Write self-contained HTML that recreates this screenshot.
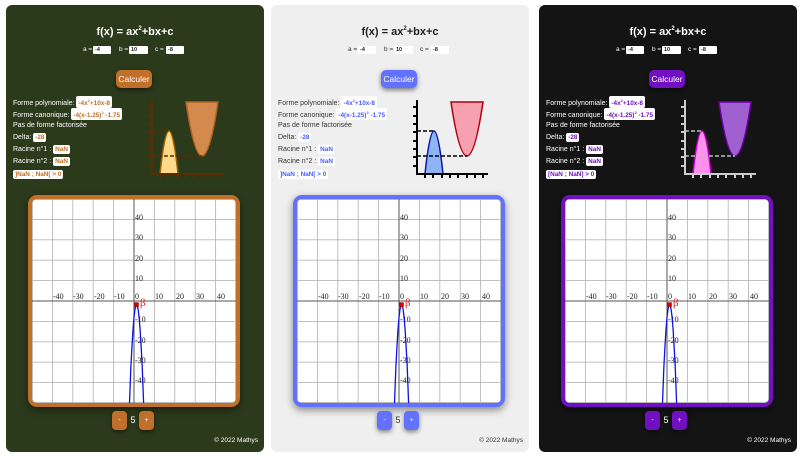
<!DOCTYPE html>
<html><head><meta charset="utf-8">
<style>
*{margin:0;padding:0;box-sizing:border-box}
body{width:800px;height:456px;background:#fff;position:relative;overflow:hidden;font-family:"Liberation Sans",sans-serif}
.p{position:absolute;top:5px;width:258px;height:447px;border-radius:6px;overflow:hidden}
.p>*{position:absolute}
.t{left:0;width:100%;top:17px;text-align:center;font-weight:bold;font-size:11px;line-height:14px}
.t sup{font-size:6px;vertical-align:5px}
.lb{font-size:6.5px;top:41px;line-height:8px}
.in{top:41px;height:8px;background:#fff;border-radius:1px;font-size:5.5px;font-weight:bold;color:#222;padding-left:2px;line-height:8px}
.btn{left:110px;top:65px;width:36px;height:18px;border-radius:5px;color:#fff;font-size:8.5px;text-align:center;line-height:18px;box-shadow:0 2px 5px rgba(0,0,0,.5)}
.r{left:7px;font-size:7px;line-height:10px;white-space:nowrap}
.b{display:inline-block;background:#fff;border-radius:2px;padding:0 2px;font-weight:bold;line-height:9px;font-size:6.4px}
.b sup{font-size:4px}
.mini{left:140px;top:94px}
.fr{left:22px;top:190px;width:212px;height:212px;border:4px solid;border-radius:9px;background:#fff;box-shadow:0 3px 8px rgba(0,0,0,.45);overflow:hidden}
.fr svg{position:absolute;left:0;top:0}
.sb{top:406px;width:15px;height:19px;border-radius:4px;color:#fff;font-size:7px;text-align:center;line-height:19px;box-shadow:0 2px 5px rgba(0,0,0,.45)}
.n{left:123px;top:406px;width:8px;text-align:center;font-size:9px;line-height:19px}
.f{right:6px;top:431px;font-size:6.5px;line-height:10px}
</style></head><body>

<!-- PANEL 1 -->
<div class="p" style="left:6px;background:#2c3a1c;color:#fff">
<div class="t">f(x) = ax<sup>2</sup>+bx+c</div>
<div class="lb" style="left:77px">a =</div><div class="in" style="left:87px;width:18px">-4</div>
<div class="lb" style="left:113px">b =</div><div class="in" style="left:123px;width:19px">10</div>
<div class="lb" style="left:149px">c =</div><div class="in" style="left:160px;width:18px">-8</div>
<div class="btn" style="background:#c0702a">Calculer</div>
<div class="r" style="top:91px">Forme polynomiale: <span class="b" style="color:#c0702a">-4x<sup>2</sup>+10x-8</span></div>
<div class="r" style="top:103px">Forme canonique: <span class="b" style="color:#c0702a">-4(x-1.25)<sup>2</sup> -1.75</span></div>
<div class="r" style="top:116px">Pas de forme factorisée</div>
<div class="r" style="top:128px">Delta: <span class="b" style="color:#c0702a">-28</span></div>
<div class="r" style="top:140px">Racine n°1 : <span class="b" style="color:#c0702a">NaN</span></div>
<div class="r" style="top:152px">Racine n°2 : <span class="b" style="color:#c0702a">NaN</span></div>
<div class="r" style="top:165px"><span class="b" style="color:#c0702a">]NaN ; NaN[ &gt; 0</span></div>
<svg class="mini" width="78" height="80" viewBox="0 0 78 80">
<path d="M14 75 Q23 -11 32 75 Z" fill="#ffd98a" stroke="#9a6200" stroke-width="1.5"/>
<path d="M40 3 Q56 111 72 3 Z" fill="#d48a4c" stroke="#b0601e" stroke-width="1.5"/>
<path d="M6 32H23M6 57H56" stroke="#5a2d00" stroke-width="1.6" stroke-dasharray="4 2"/>
<path d="M6 1V76M5 75H77M2 67H6M2 58H6M2 50H6M2 42H6M2 33H6M2 25H6M2 17H6M2 8H6M14 75V79M22 75V79M31 75V79M39 75V79M47 75V79M56 75V79M64 75V79M72 75V79" stroke="#5a2d00" stroke-width="2" fill="none"/>
</svg>
<div class="fr" style="border-color:#c0702a">
<svg width="204" height="204" viewBox="0 0 204 204">
<g stroke="#b8b8b8" stroke-width="0.9"><path d="M0.5 0V204M20.4 0V204M40.8 0V204M61.2 0V204M81.6 0V204M122.4 0V204M142.8 0V204M163.2 0V204M183.6 0V204M203.5 0V204M0 0.5H204M0 20.4H204M0 40.8H204M0 61.2H204M0 81.6H204M0 122.4H204M0 142.8H204M0 163.2H204M0 183.6H204M0 203.5H204"/></g>
<path d="M102 0V204M0 102H204" stroke="#555" stroke-width="1"/>
<g font-family="Liberation Serif,serif" font-size="8" fill="#222"><text x="21" y="100">-40</text><text x="41" y="100">-30</text><text x="62" y="100">-20</text><text x="82" y="100">-10</text><text x="103" y="100">0</text><text x="123" y="100">10</text><text x="144" y="100">20</text><text x="164" y="100">30</text><text x="185" y="100">40</text><text x="103" y="21">40</text><text x="103" y="41">30</text><text x="103" y="62">20</text><text x="103" y="82">10</text><text x="103" y="123">-10</text><text x="103" y="144">-20</text><text x="103" y="164">-30</text><text x="103" y="184">-40</text></g>
<polyline points="97.5,204 98.9,167.3 100,146.9 101,130.6 102,118.3 103,110.2 104,106.1 104.6,105.6 105.1,106.1 106.1,110.2 107.1,118.3 108.1,130.6 109.1,146.9 110.2,167.3 111.6,204" fill="none" stroke="#1010e0" stroke-width="1.3"/>
<rect x="102.5" y="103.6" width="4" height="4" fill="#d00" stroke="#800" stroke-width=".5"/>
<text x="108" y="107" font-family="Liberation Serif,serif" font-size="11" fill="#e02020">β</text>
</svg></div>
<div class="sb" style="left:106px;background:#c0702a">-</div><div class="n">5</div><div class="sb" style="left:133px;background:#c0702a">+</div>
<div class="f">© 2022 Mathys</div>
</div>

<!-- PANEL 2 -->
<div class="p" style="left:271px;background:#efefef;color:#333">
<div class="t" style="color:#222">f(x) = ax<sup>2</sup>+bx+c</div>
<div class="lb" style="left:77px">a =</div><div class="in" style="left:87px;width:18px">-4</div>
<div class="lb" style="left:113px">b =</div><div class="in" style="left:123px;width:19px">10</div>
<div class="lb" style="left:149px">c =</div><div class="in" style="left:160px;width:18px">-8</div>
<div class="btn" style="background:#6272ff">Calculer</div>
<div class="r" style="top:91px">Forme polynomiale: <span class="b" style="color:#4a5cff">-4x<sup>2</sup>+10x-8</span></div>
<div class="r" style="top:103px">Forme canonique: <span class="b" style="color:#4a5cff">-4(x-1.25)<sup>2</sup> -1.75</span></div>
<div class="r" style="top:116px">Pas de forme factorisée</div>
<div class="r" style="top:128px">Delta: <span class="b" style="color:#4a5cff">-28</span></div>
<div class="r" style="top:140px">Racine n°1 : <span class="b" style="color:#4a5cff">NaN</span></div>
<div class="r" style="top:152px">Racine n°2 : <span class="b" style="color:#4a5cff">NaN</span></div>
<div class="r" style="top:165px"><span class="b" style="color:#4a5cff">]NaN ; NaN[ &gt; 0</span></div>
<svg class="mini" width="78" height="80" viewBox="0 0 78 80">
<path d="M14 75 Q23 -11 32 75 Z" fill="#8fb4f5" stroke="#0a1aa0" stroke-width="1.5"/>
<path d="M40 3 Q56 111 72 3 Z" fill="#f7a0b0" stroke="#b00010" stroke-width="1.5"/>
<path d="M6 32H23M6 57H56" stroke="#000" stroke-width="1.6" stroke-dasharray="4 2"/>
<path d="M6 1V76M5 75H77M2 67H6M2 58H6M2 50H6M2 42H6M2 33H6M2 25H6M2 17H6M2 8H6M14 75V79M22 75V79M31 75V79M39 75V79M47 75V79M56 75V79M64 75V79M72 75V79" stroke="#000" stroke-width="2" fill="none"/>
</svg>
<div class="fr" style="border-color:#6272ff">
<svg width="204" height="204" viewBox="0 0 204 204">
<g stroke="#b8b8b8" stroke-width="0.9"><path d="M0.5 0V204M20.4 0V204M40.8 0V204M61.2 0V204M81.6 0V204M122.4 0V204M142.8 0V204M163.2 0V204M183.6 0V204M203.5 0V204M0 0.5H204M0 20.4H204M0 40.8H204M0 61.2H204M0 81.6H204M0 122.4H204M0 142.8H204M0 163.2H204M0 183.6H204M0 203.5H204"/></g>
<path d="M102 0V204M0 102H204" stroke="#555" stroke-width="1"/>
<g font-family="Liberation Serif,serif" font-size="8" fill="#222"><text x="21" y="100">-40</text><text x="41" y="100">-30</text><text x="62" y="100">-20</text><text x="82" y="100">-10</text><text x="103" y="100">0</text><text x="123" y="100">10</text><text x="144" y="100">20</text><text x="164" y="100">30</text><text x="185" y="100">40</text><text x="103" y="21">40</text><text x="103" y="41">30</text><text x="103" y="62">20</text><text x="103" y="82">10</text><text x="103" y="123">-10</text><text x="103" y="144">-20</text><text x="103" y="164">-30</text><text x="103" y="184">-40</text></g>
<polyline points="97.5,204 98.9,167.3 100,146.9 101,130.6 102,118.3 103,110.2 104,106.1 104.6,105.6 105.1,106.1 106.1,110.2 107.1,118.3 108.1,130.6 109.1,146.9 110.2,167.3 111.6,204" fill="none" stroke="#1010e0" stroke-width="1.3"/>
<rect x="102.5" y="103.6" width="4" height="4" fill="#d00" stroke="#800" stroke-width=".5"/>
<text x="108" y="107" font-family="Liberation Serif,serif" font-size="11" fill="#e02020">β</text>
</svg></div>
<div class="sb" style="left:106px;background:#6272ff">-</div><div class="n">5</div><div class="sb" style="left:133px;background:#6272ff">+</div>
<div class="f">© 2022 Mathys</div>
</div>

<!-- PANEL 3 -->
<div class="p" style="left:539px;background:#141414;color:#fff">
<div class="t">f(x) = ax<sup>2</sup>+bx+c</div>
<div class="lb" style="left:77px">a =</div><div class="in" style="left:87px;width:18px">-4</div>
<div class="lb" style="left:113px">b =</div><div class="in" style="left:123px;width:19px">10</div>
<div class="lb" style="left:149px">c =</div><div class="in" style="left:160px;width:18px">-8</div>
<div class="btn" style="background:#7010c0">Calculer</div>
<div class="r" style="top:91px">Forme polynomiale: <span class="b" style="color:#7010c0">-4x<sup>2</sup>+10x-8</span></div>
<div class="r" style="top:103px">Forme canonique: <span class="b" style="color:#7010c0">-4(x-1.25)<sup>2</sup> -1.75</span></div>
<div class="r" style="top:116px">Pas de forme factorisée</div>
<div class="r" style="top:128px">Delta: <span class="b" style="color:#7010c0">-28</span></div>
<div class="r" style="top:140px">Racine n°1 : <span class="b" style="color:#7010c0">NaN</span></div>
<div class="r" style="top:152px">Racine n°2 : <span class="b" style="color:#7010c0">NaN</span></div>
<div class="r" style="top:165px"><span class="b" style="color:#7010c0">[NaN ; NaN] &gt; 0</span></div>
<svg class="mini" width="78" height="80" viewBox="0 0 78 80">
<path d="M14 75 Q23 -11 32 75 Z" fill="#ff90ee" stroke="#c000c0" stroke-width="1.5"/>
<path d="M40 3 Q56 111 72 3 Z" fill="#a060d0" stroke="#7000b0" stroke-width="1.5"/>
<path d="M6 32H23M6 57H56" stroke="#bbb" stroke-width="1.6" stroke-dasharray="4 2"/>
<path d="M6 1V76M5 75H77M2 67H6M2 58H6M2 50H6M2 42H6M2 33H6M2 25H6M2 17H6M2 8H6M14 75V79M22 75V79M31 75V79M39 75V79M47 75V79M56 75V79M64 75V79M72 75V79" stroke="#ccc" stroke-width="2" fill="none"/>
</svg>
<div class="fr" style="border-color:#7010c0">
<svg width="204" height="204" viewBox="0 0 204 204">
<g stroke="#b8b8b8" stroke-width="0.9"><path d="M0.5 0V204M20.4 0V204M40.8 0V204M61.2 0V204M81.6 0V204M122.4 0V204M142.8 0V204M163.2 0V204M183.6 0V204M203.5 0V204M0 0.5H204M0 20.4H204M0 40.8H204M0 61.2H204M0 81.6H204M0 122.4H204M0 142.8H204M0 163.2H204M0 183.6H204M0 203.5H204"/></g>
<path d="M102 0V204M0 102H204" stroke="#555" stroke-width="1"/>
<g font-family="Liberation Serif,serif" font-size="8" fill="#222"><text x="21" y="100">-40</text><text x="41" y="100">-30</text><text x="62" y="100">-20</text><text x="82" y="100">-10</text><text x="103" y="100">0</text><text x="123" y="100">10</text><text x="144" y="100">20</text><text x="164" y="100">30</text><text x="185" y="100">40</text><text x="103" y="21">40</text><text x="103" y="41">30</text><text x="103" y="62">20</text><text x="103" y="82">10</text><text x="103" y="123">-10</text><text x="103" y="144">-20</text><text x="103" y="164">-30</text><text x="103" y="184">-40</text></g>
<polyline points="97.5,204 98.9,167.3 100,146.9 101,130.6 102,118.3 103,110.2 104,106.1 104.6,105.6 105.1,106.1 106.1,110.2 107.1,118.3 108.1,130.6 109.1,146.9 110.2,167.3 111.6,204" fill="none" stroke="#1010e0" stroke-width="1.3"/>
<rect x="102.5" y="103.6" width="4" height="4" fill="#d00" stroke="#800" stroke-width=".5"/>
<text x="108" y="107" font-family="Liberation Serif,serif" font-size="11" fill="#e02020">β</text>
</svg></div>
<div class="sb" style="left:106px;background:#7010c0">-</div><div class="n">5</div><div class="sb" style="left:133px;background:#7010c0">+</div>
<div class="f">© 2022 Mathys</div>
</div>

</body></html>
